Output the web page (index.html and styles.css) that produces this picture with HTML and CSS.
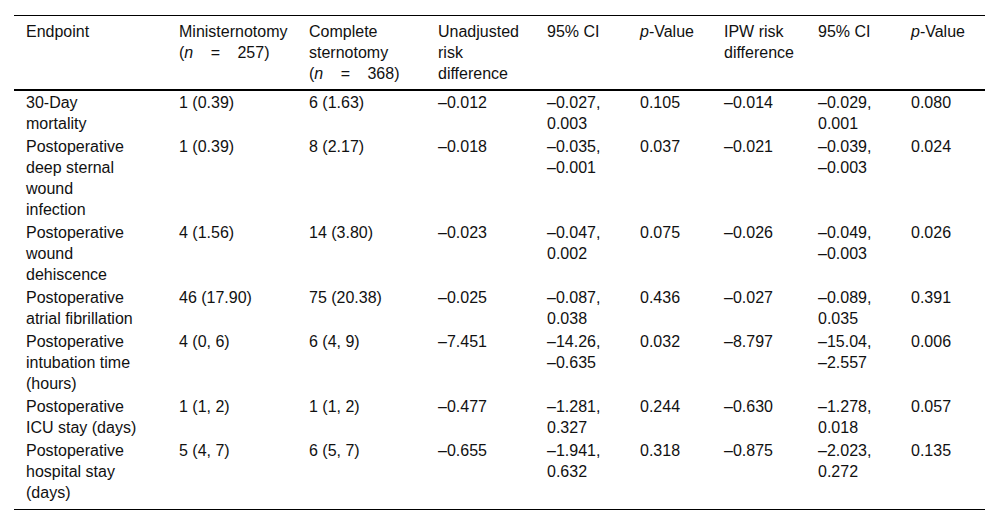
FILE: index.html
```html
<!DOCTYPE html>
<html lang="en">
<head>
<meta charset="utf-8">
<title>Endpoints</title>
<link rel="stylesheet" href="styles.css">
</head>
<body>
<div class="page">
<table class="results">
<colgroup>
<col class="c1"><col class="c2"><col class="c3"><col class="c4"><col class="c5"><col class="c6"><col class="c7"><col class="c8"><col class="c9">
</colgroup>
<thead>
<tr>
<th class="first">Endpoint</th>
<th>Ministernotomy <span class="count">(<i>n</i> = 257)</span></th>
<th>Complete sternotomy <span class="count">(<i>n</i> = 368)</span></th>
<th>Unadjusted risk difference</th>
<th>95% CI</th>
<th><i>p</i>-Value</th>
<th>IPW risk difference</th>
<th>95% CI</th>
<th><i>p</i>-Value</th>
</tr>
</thead>
<tbody>
<tr><td class="first">30-Day mortality</td><td>1 (0.39)</td><td>6 (1.63)</td><td>–0.012</td><td><span class="v">–0.027,</span> <span class="v">0.003</span></td><td>0.105</td><td>–0.014</td><td><span class="v">–0.029,</span> <span class="v">0.001</span></td><td>0.080</td></tr>
<tr><td class="first">Postoperative deep sternal wound infection</td><td>1 (0.39)</td><td>8 (2.17)</td><td>–0.018</td><td><span class="v">–0.035,</span> <span class="v">–0.001</span></td><td>0.037</td><td>–0.021</td><td><span class="v">–0.039,</span> <span class="v">–0.003</span></td><td>0.024</td></tr>
<tr><td class="first">Postoperative wound dehiscence</td><td>4 (1.56)</td><td>14 (3.80)</td><td>–0.023</td><td><span class="v">–0.047,</span> <span class="v">0.002</span></td><td>0.075</td><td>–0.026</td><td><span class="v">–0.049,</span> <span class="v">–0.003</span></td><td>0.026</td></tr>
<tr><td class="first">Postoperative atrial fibrillation</td><td>46 (17.90)</td><td>75 (20.38)</td><td>–0.025</td><td><span class="v">–0.087,</span> <span class="v">0.038</span></td><td>0.436</td><td>–0.027</td><td><span class="v">–0.089,</span> <span class="v">0.035</span></td><td>0.391</td></tr>
<tr><td class="first">Postoperative intubation time (hours)</td><td>4 (0, 6)</td><td>6 (4, 9)</td><td>–7.451</td><td><span class="v">–14.26,</span> <span class="v">–0.635</span></td><td>0.032</td><td>–8.797</td><td><span class="v">–15.04,</span> <span class="v">–2.557</span></td><td>0.006</td></tr>
<tr><td class="first">Postoperative ICU stay (days)</td><td>1 (1, 2)</td><td>1 (1, 2)</td><td>–0.477</td><td><span class="v">–1.281,</span> <span class="v">0.327</span></td><td>0.244</td><td>–0.630</td><td><span class="v">–1.278,</span> <span class="v">0.018</span></td><td>0.057</td></tr>
<tr class="last"><td class="first">Postoperative hospital stay (days)</td><td>5 (4, 7)</td><td>6 (5, 7)</td><td>–0.655</td><td><span class="v">–1.941,</span> <span class="v">0.632</span></td><td>0.318</td><td>–0.875</td><td><span class="v">–2.023,</span> <span class="v">0.272</span></td><td>0.135</td></tr>
</tbody>
</table>
</div>
</body>
</html>
```
FILE: styles.css
```css
html, body {
  margin: 0;
  padding: 0;
  background: #fff;
}
.page {
  padding: 15px 14px 0 14px;
}
.results {
  width: 971px;
  table-layout: fixed;
  border-collapse: collapse;
  font-family: "Liberation Sans", Arial, sans-serif;
  font-size: 16px;
  line-height: 21px;
  color: #111;
  border-top: 1px solid #000;
  border-bottom: 1px solid #000;
}
.c1 { width: 153px; }
.c2 { width: 130px; }
.c3 { width: 129px; }
.c4 { width: 109px; }
.c5 { width: 93px; }
.c6 { width: 84px; }
.c7 { width: 94px; }
.c8 { width: 93px; }
.c9 { width: 86px; }
.results th,
.results td {
  text-align: left;
  vertical-align: top;
  font-weight: normal;
  padding: 1px 4px 1px 12px;
}
.results th {
  padding-top: 5px;
  padding-bottom: 5px;
  border-bottom: 2px solid #000;
}
.results .first {
  padding-right: 30px;
}
.results .last td {
  padding-bottom: 6px;
}
.v {
  white-space: nowrap;
}
.count {
  display: inline-block;
  white-space: nowrap;
  word-spacing: 13px;
}
```
